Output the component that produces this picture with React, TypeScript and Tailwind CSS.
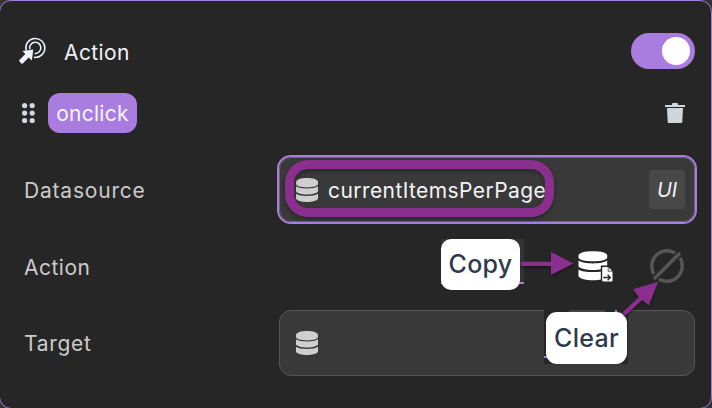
import React from "react";

function Database({ className }: { className?: string }) {
  return (
    <svg viewBox="0 0 22 24" preserveAspectRatio="none" fill="currentColor" className={className}>
      <path d="M0 4.200C0 1.600 5 .1 11 .1s11 1.500 11 4.100v1.600c0 2.300-5 3.600-11 3.600S0 8.100 0 5.800Z" />
      <path d="M0 8.300c2.200 1.500 6.200 2.200 11 2.200s8.800-.7 11-2.200v5.300c-1.500 1.900-5.700 3-11 3s-9.500-1.100-11-3Z" />
      <path d="M0 15.700c2.200 1.500 6.200 2.200 11 2.200s8.800-.7 11-2.200v5c-1 2-5.500 3.200-11 3.200S1 22.700 0 20.700Z" />
    </svg>
  );
}

function ClickIcon() {
  return (
    <svg width="30" height="30" viewBox="0 0 30 30" className="shrink-0 text-[#f0f3fb]">
      <path d="M9.200 14.500A9.500 9.500 0 1 1 17 21.300" fill="none" stroke="currentColor" strokeWidth="1.500" />
      <path d="M12.800 13.100A5.600 5.600 0 1 1 17.600 17.400" fill="none" stroke="currentColor" strokeWidth="1.500" />
      <path d="m16.300 13.500-1.400 11-3.200-3.100-5.900 6q-.8.700-1.500 0l-2-2.100q-.6-.7.100-1.400l6-5.800-3-3Z" fill="currentColor" />
    </svg>
  );
}

function Label({ text, className }: { text: string; className: string }) {
  return <span className={`w-[255px] shrink-0 text-[21px] text-[#cbcbcb] ${className}`}>{text}</span>;
}

export default function App() {
  return (
    <div className="relative h-[408px] w-[712px] overflow-hidden bg-[#333] font-[Inter,sans-serif] leading-none">
      <main className="-ml-px flex h-[409px] w-[713px] flex-col rounded-[12px] border border-[#a97ddf] bg-[#262626] pt-[20px] pr-[16px] pl-[24px]">
        <header className="flex h-[60px] shrink-0 items-center">
          <div className="-ml-[7px] flex h-[30px] w-[47px]"><ClickIcon /></div>
          <h1 className="pt-[2px] text-[21px] tracking-[0.400px] text-[#f0f2f7]">Action</h1>
          <button aria-label="Toggle action" className="ml-auto flex h-9 w-16 items-center justify-end rounded-full bg-[#a97ddf] pr-[5px]">
            <span className="size-7 rounded-full bg-white" />
          </button>
        </header>

        <div className="flex h-[64px] shrink-0 items-center">
          <svg width="24" height="24" viewBox="0 0 24 24" className="-ml-[3px] text-[#d5d7de]" fill="currentColor">
            <circle cx="3.600" cy="4.600" r="2.600" /><circle cx="11.200" cy="4.600" r="2.600" />
            <circle cx="3.600" cy="12.100" r="2.600" /><circle cx="11.200" cy="12.100" r="2.600" />
            <circle cx="3.600" cy="19.500" r="2.600" /><circle cx="11.200" cy="19.500" r="2.600" />
          </svg>
          <span className="ml-[3px] flex h-10 w-[89px] items-center justify-center rounded-[12px] bg-[#a97ddf] pt-[1px] text-[21px] tracking-[0.250px] text-[#f5f6fc]">onclick</span>
          <svg width="20" height="20" viewBox="0 0 20 20" className="mr-[10px] ml-auto text-[#d2d5da]" fill="currentColor">
            <path d="M0 2h7V.8Q7 0 8 0h4q1 0 1 .8V2h7v2H0Z" />
            <path d="M2 5h16l-.7 14q-.1 1-1.100 1H3.800q-1 0-1.100-1Z" />
          </svg>
        </div>

        <div className="flex h-[89px] shrink-0 items-center">
          <Label text="Datasource" className="pt-[1px] tracking-[0.800px]" />
          <div className="-mx-[2px] h-[69px] w-[420px] shrink-0 rounded-[14px] border-2 border-[#a97ddf]">
            <div className="flex h-full items-center rounded-[12px] border border-[#686868] bg-[#393939] pr-[9px] pl-[16px]">
              <Database className="h-6 w-[22px] text-[#cfcfcf]" />
              <span className="ml-[10px] pt-[1px] text-[21px] tracking-[0.420px] whitespace-nowrap text-[#f3f4f6]">currentItemsPerPage</span>
              <span className="ml-auto flex h-[39px] w-9 items-center justify-center rounded-[4px] bg-[#484848] pt-[1px] text-[20px] text-[#f3f4f6] italic">UI</span>
            </div>
          </div>
        </div>

        <div className="flex h-[65px] shrink-0 items-center">
          <Label text="Action" className="pt-[1px] tracking-[0.500px]" />
          <div className="ml-auto flex items-center pr-[11px]">
            <svg width="35" height="32" viewBox="0 0 35 32" className="mr-[37px] text-white">
              <g fill="currentColor">
                <path d="M.5 4.500C.5 1.600 7 .2 15 .2s14.200 1.400 14.200 4.300v1.700c0 2.700-6.200 4-14.200 4S.5 8.900.5 6.200Z" />
                <path d="M.5 9.500c2.800 2 8.300 2.900 14.500 2.900s11.500-.9 14.200-2.900v5.700c-2 2.600-7.700 3.800-14.200 3.800S2.500 17.800.5 15.200Z" />
                <path d="M.5 18.400c2.800 1.900 8.300 2.700 14.500 2.700s11.500-.8 14.200-2.700v6.800c-1.500 2.700-7.700 4-14.200 4S2 27.900.5 25.200Z" />
              </g>
              <path d="M22.800 14.600h7l4.700 4.900V32H22.800Z" fill="#262626" />
              <path d="M24.200 16h5.600v4.500h4.700v9q0 1-1 1h-8.300q-1 0-1-1V17q0-1 1-1Zm6.300.2 3.600 3.500h-3.600Z" fill="currentColor" />
              <path d="M25.400 26.500h7m-2.800-2.800 2.800 2.800-2.800 2.800" fill="none" stroke="#262626" strokeWidth="1.300" />
            </svg>
            <svg width="34" height="34" viewBox="0 0 34 34" fill="none" stroke="#565656" className="-mt-[1px]">
              <circle cx="17" cy="17" r="15.200" strokeWidth="3.400" />
              <path d="M2 32 32 2" stroke="#262626" strokeWidth="7" />
              <path d="M4 30 30 4" strokeWidth="3.700" />
            </svg>
          </div>
        </div>

        <div className="flex h-[88px] shrink-0 items-center">
          <Label text="Target" className="tracking-[0.700px]" />
          <div className="flex h-[66px] w-[416px] shrink-0 items-center rounded-[12px] border border-[#555] bg-[#393939] pl-[16px]">
            <Database className="h-6 w-[22px] text-[#cfcfcf]" />
          </div>
        </div>
      </main>

      <div className="absolute top-[160px] left-[285px] h-[57px] w-[269px] rounded-[23px] border-[9px] border-[#8a2f8d] shadow-[0_2px_4px_rgba(0,0,0,0.350),inset_0_2px_4px_rgba(0,0,0,0.350)]" />

      <div className="absolute top-[239px] left-[441px] h-[51px] w-[83px]">
        <div className="h-[45px] border-b-2 border-[#a97ddf] bg-[#333]" />
        <div className="absolute top-[45px] left-0 h-[6px] w-full bg-[#262626]" />
        <span className="absolute top-0 left-0 flex h-[51px] w-[79px] items-center justify-center rounded-[10px] bg-white text-[25px] tracking-[0.300px] font-medium text-[#2d3a4c]">Copy</span>
      </div>
      <div className="absolute top-[310px] left-[544px] h-[54px] w-[84px] bg-[#262626]">
        <div className="absolute top-0 left-[25px] h-[2px] w-[36px] bg-[#444]" />
        <div className="absolute top-0 left-[71px] h-[2px] w-[2px] bg-[#a97ddf]" />
        <div className="absolute top-[46px] left-0 h-[2px] w-[5px] bg-[#a97ddf]" />
        <span className="absolute top-[2px] left-[2px] flex h-[52px] w-[81px] items-center justify-center rounded-[11px] bg-white text-[25px] tracking-[0.300px] font-medium text-[#2d3a4c]">Clear</span>
      </div>
      <svg width="150" height="80" viewBox="515 240 150 80" className="absolute top-[240px] left-[515px] drop-shadow-[0_2px_1px_rgba(0,0,0,0.350)]" fill="#8a2f8d">
        <path d="M521 261.800h30V252l22.500 11.500-22.500 11.500v-9h-30Z" />
        <path d="m622.500 312.500 16.200-15.200-5.500-8 25-7.500-9.300 23.700-6.700-5.400-16.700 15.400Z" />
      </svg>
    </div>
  );
}
